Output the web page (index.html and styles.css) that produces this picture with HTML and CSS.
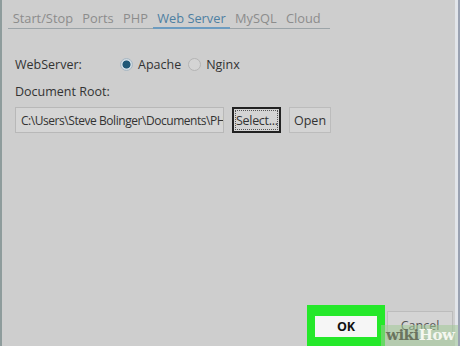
FILE: index.html
```html
<!DOCTYPE html>
<html>
<head>
  <title>Settings - Web Server</title>
  <link rel="stylesheet" href="styles.css">
</head>
<body>

<div class="window">
  <div class="tabs">
    <span class="tab">Start/Stop</span>
    <span class="tab">Ports</span>
    <span class="tab">PHP</span>
    <span class="tab active">Web Server</span>
    <span class="tab">MySQL</span>
    <span class="tab">Cloud</span>
  </div>

  <div class="content">
    <div class="row">
      <span class="label">WebServer:</span>
      <span class="radio checked"></span><span class="opt">Apache</span>
      <span class="radio"></span><span class="opt">Nginx</span>
    </div>
    <div class="label doc">Document Root:</div>
    <div class="row">
      <div class="field">C:\Users\Steve Bolinger\Documents\PHP</div>
      <button class="btn focus">Select...</button>
      <button class="btn">Open</button>
    </div>
  </div>

  <div class="footer">
    <div class="highlight"><button class="btn ok">OK</button></div>
    <button class="btn cancel">Cancel</button>
  </div>

  <div class="watermark"><span class="wiki">wiki</span><span class="how">How</span></div>
</div>

</body>
</html>
```

FILE: styles.css
```css
body {
  margin: 0;
  background: #cecece;
  font-family: "Open Sans", "Noto Sans", sans-serif;
  color: #333;
  overflow: hidden;
}
.window {
  position: relative;
  height: 346px;
  box-sizing: border-box;
  border-left: 2px solid #8e9c9c;
  border-right: 2px solid #9aa2b2;
  box-shadow: inset -3px 0 0 #e2e5ea;
  display: flex;
  flex-direction: column;
}
.tabs {
  display: flex;
  align-self: flex-start;
  margin: 7px 0 0 6px;
  border-bottom: 1px solid #9ca4a8;
  padding-right: 5px;
}
.tab {
  font-size: 12.8px;
  line-height: 18px;
  color: #8c8c8c;
  padding: 2px 4.7px 0;
  margin-bottom: -1px;
  border-bottom: 2px solid transparent;
}
.tab.active {
  color: #4d7fa2;
  border-bottom-color: #6d9cc0;
}
.content {
  padding: 27px 13px 0;
  font-size: 12.5px;
  line-height: 17px;
}
.row {
  display: flex;
  align-items: center;
}
.label {
  width: 105px;
}
.radio {
  width: 13px;
  height: 13px;
  border-radius: 50%;
  border: 1px solid #b4b4b4;
  background: #d4d4d4;
  box-sizing: border-box;
  margin-right: 5px;
}
.radio.checked {
  border: 1px solid #a8b8c4;
  background: radial-gradient(circle, #1f5877 0 3.6px, #cfdbe3 4.4px);
}
.opt {
  margin-right: 7px;
}
.doc {
  margin: 10px 0 7px;
}
.field {
  width: 209px;
  height: 26px;
  box-sizing: border-box;
  border: 1px solid #b8b8b8;
  background: #d5d5d5;
  padding: 4px 5px;
  white-space: nowrap;
  overflow: hidden;
  font-size: 12px;
  letter-spacing: -0.45px;
}
.btn {
  font-family: inherit;
  font-size: 12.5px;
  color: #333;
  background: #d4d4d4;
  border: 1px solid #bcbcbc;
  height: 26px;
  padding: 0 4px;
  margin-left: 8px;
}
.btn.focus {
  border: 2px solid #222;
  outline: 1px dotted #555;
  outline-offset: -4px;
  width: 49px;
  padding: 0 2px;
  letter-spacing: -0.3px;
}
.footer {
  margin-top: auto;
  display: flex;
  align-items: flex-start;
  justify-content: flex-end;
  padding-right: 5px;
}
.highlight {
  background: #25e82a;
  padding: 9px 8px 9px;
}
.btn.ok {
  margin: 0;
  background: #f6f6f6;
  border: none;
  width: 62px;
  height: 21px;
  font-weight: bold;
  color: #111;
}
.btn.cancel {
  margin: 6px 0 0 2px;
  width: 66px;
  height: 28px;
  color: #555;
}
.watermark {
  position: absolute;
  right: 0;
  bottom: 0;
  width: 72px;
  height: 21px;
  padding-left: 5px;
  background: rgba(160, 200, 150, 0.55);
  font-family: "DejaVu Serif", serif;
  font-weight: bold;
  font-size: 15px;
  line-height: 21px;
  letter-spacing: -0.5px;
}
.wiki {
  color: #6a745e;
}
.how {
  color: #f4f7f0;
}
```
